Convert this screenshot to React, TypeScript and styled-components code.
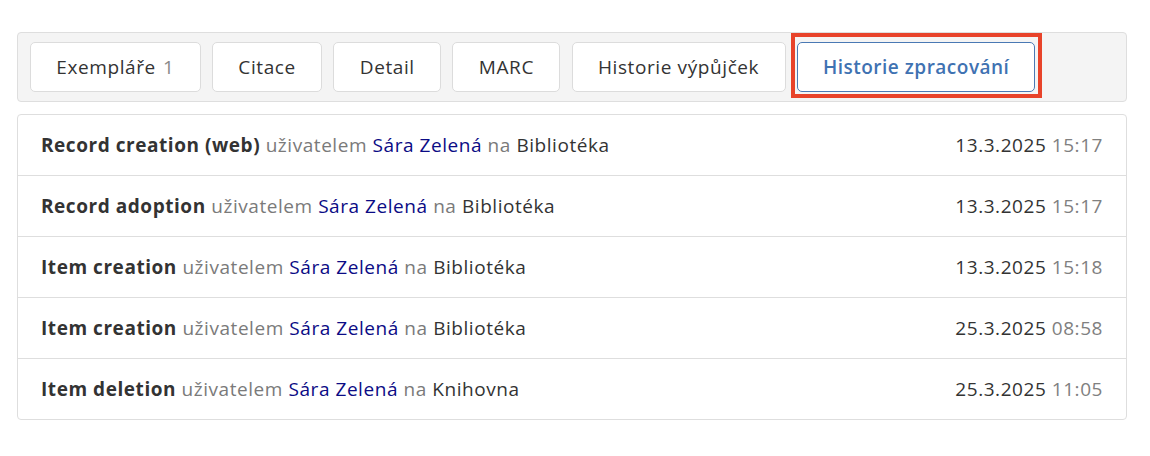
import React from "react";
import styled, { createGlobalStyle } from "styled-components";

const Global = createGlobalStyle`
  html, body { margin: 0; padding: 0; background: #ffffff; }
  body { font-family: "Open Sans", "Noto Sans", "Liberation Sans", sans-serif; color: #333; }
`;

const Page = styled.div`
  padding: 32px 23px 0 17px;
  display: flex;
  flex-direction: column;
  gap: 12px;
  width: 1110px;
`;

const TabBar = styled.div`
  display: flex;
  align-items: center;
  gap: 11.4px;
  padding: 9px 12px;
  background: #f4f4f4;
  border: 1px solid #dedede;
  border-radius: 4px;
`;

const Tab = styled.button<{ $active?: boolean }>`
  position: relative;
  height: 50px;
  box-sizing: border-box;
  padding: 0 ${(p) => (p.$active ? "25px" : "25.3px")};
  background: #fff;
  border: 1px solid ${(p) => (p.$active ? "#4a79b4" : "#dcdcdc")};
  border-radius: 5px;
  font-family: inherit;
  font-size: 19px;
  letter-spacing: ${(p) => (p.$active ? "0.5px" : "0.6px")};
  color: ${(p) => (p.$active ? "#3f72b2" : "#333")};
  font-weight: ${(p) => (p.$active ? 600 : 400)};
  cursor: pointer;
  ${(p) =>
    p.$active
      ? `&::after {
    content: "";
    position: absolute;
    top: -10px;
    left: -7px;
    right: -8px;
    bottom: -7px;
    border: 4px solid #e8432a;
    pointer-events: none;
  }`
      : ""}
`;

const Count = styled.span`
  color: #888;
  margin-left: 7px;
`;

const Table = styled.div`
  border: 1px solid #dedede;
  border-radius: 4px;
  display: flex;
  flex-direction: column;
`;

const Row = styled.div`
  display: flex;
  align-items: center;
  justify-content: space-between;
  height: 60px;
  padding: 0 23px;
  font-size: 19px;
  letter-spacing: 0.55px;
  & + & {
    border-top: 1px solid #dedede;
  }
`;

const Action = styled.span`
  font-weight: 700;
  color: #333;
`;

const Muted = styled.span`
  color: #7a7a7a;
`;

const User = styled.span`
  color: #0b0b85;
`;

const Place = styled.span`
  color: #333;
`;

const DateText = styled.span`
  color: #333;
`;

const Time = styled.span`
  color: #808080;
`;

const rows = [
  { action: "Record creation (web)", place: "Bibliotéka", date: "13.3.2025", time: "15:17" },
  { action: "Record adoption", place: "Bibliotéka", date: "13.3.2025", time: "15:17" },
  { action: "Item creation", place: "Bibliotéka", date: "13.3.2025", time: "15:18" },
  { action: "Item creation", place: "Bibliotéka", date: "25.3.2025", time: "08:58" },
  { action: "Item deletion", place: "Knihovna", date: "25.3.2025", time: "11:05" },
];

export default function App() {
  return (
    <>
      <Global />
      <Page>
        <TabBar>
          <Tab>
            Exempláře<Count>1</Count>
          </Tab>
          <Tab>Citace</Tab>
          <Tab>Detail</Tab>
          <Tab>MARC</Tab>
          <Tab>Historie výpůjček</Tab>
          <Tab $active>Historie zpracování</Tab>
        </TabBar>
        <Table>
          {rows.map((r, i) => (
            <Row key={i}>
              <span>
                <Action>{r.action}</Action> <Muted>uživatelem</Muted> <User>Sára Zelená</User>{" "}
                <Muted>na</Muted> <Place>{r.place}</Place>
              </span>
              <span>
                <DateText>{r.date}</DateText> <Time>{r.time}</Time>
              </span>
            </Row>
          ))}
        </Table>
      </Page>
    </>
  );
}
